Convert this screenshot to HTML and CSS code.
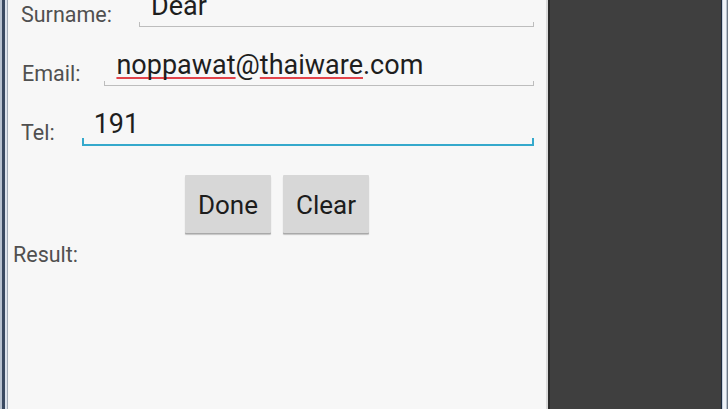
FILE: index.html
```html
<!DOCTYPE html>
<html>
<head>
<meta charset="utf-8">
<link rel="stylesheet" href="styles.css">
</head>
<body>
<div class="device">
  <div class="frame-left"></div>
  <div class="screen">
    <div class="row row-first">
      <span class="label">Surname:</span>
      <div class="field"><span class="value">Dear</span></div>
    </div>
    <div class="row">
      <span class="label label-tight">Email:</span>
      <div class="field"><span class="value"><span class="spell">noppawat</span>@<span class="spell">thaiware</span>.com</span></div>
    </div>
    <div class="row">
      <span class="label">Tel:</span>
      <div class="field field-focus"><span class="value">191</span></div>
    </div>
    <div class="buttons">
      <button class="btn">Done</button>
      <button class="btn">Clear</button>
    </div>
    <div class="result">Result:</div>
  </div>
  <div class="divider"></div>
  <div class="dark"></div>
  <div class="frame-right"></div>
</div>
</body>
</html>
```
FILE: styles.css
```css
html, body {
  margin: 0;
  padding: 0;
  width: 728px;
  height: 409px;
  overflow: hidden;
  font-family: Roboto, "Liberation Sans", sans-serif;
}

.device {
  display: flex;
  width: 728px;
  height: 409px;
}

.frame-left {
  flex: 0 0 8px;
  background: linear-gradient(to right,
    #b9c3d1 0 2px,
    #3a4a62 2px 5px,
    #dde3ec 5px 7px,
    #a3acb8 7px 8px);
}

.screen {
  flex: 0 0 538px;
  box-sizing: border-box;
  padding: 0 12px 0 5px;
  background: #f7f7f7;
  overflow: hidden;
}

.row {
  display: flex;
  align-items: flex-start;
  padding-left: 8px;
  margin-top: 22px;
}

.row-first {
  margin-top: -10px;
}

.label {
  font-size: 21.5px;
  line-height: 25px;
  color: #505050;
  margin-top: 12px;
  margin-right: 27px;
  white-space: nowrap;
}

.label-tight {
  margin-left: 1px;
  margin-right: 24px;
}

.field {
  flex: 1;
  position: relative;
  padding: 0 0 4px 12px;
  border-bottom: 1px solid #bdbdbd;
  font-size: 27px;
  line-height: 32px;
  color: #1e1e1e;
  white-space: nowrap;
}

.field::before,
.field::after {
  content: "";
  position: absolute;
  bottom: 0;
  width: 1px;
  height: 4px;
  background: #bdbdbd;
}

.field::before { left: 0; }
.field::after { right: 0; }

.field-focus {
  border-bottom: 2px solid #35a9cc;
}

.field-focus::before,
.field-focus::after {
  width: 2px;
  height: 6px;
  background: #35a9cc;
}

.spell {
  text-decoration-line: underline;
  text-decoration-color: #e2434a;
  text-decoration-thickness: 2px;
  text-underline-offset: 3px;
  text-decoration-skip-ink: none;
}

.buttons {
  display: flex;
  justify-content: center;
  gap: 12px;
  margin: 29px -12px 0 -5px;
}

.btn {
  height: 58px;
  box-sizing: border-box;
  padding: 3px 13px 0 13px;
  border: none;
  border-radius: 1px;
  background: #d7d7d7;
  box-shadow: 0 1px 0 #a9a9a9, 0 2px 1px #c4c4c4;
  font-family: Roboto, "Liberation Sans", sans-serif;
  font-size: 26px;
  line-height: 55px;
  color: #1c1c1c;
}

.result {
  font-size: 21.5px;
  line-height: 25px;
  color: #505050;
  margin-top: 9px;
}

.divider {
  flex: 0 0 4px;
  background: linear-gradient(to right,
    #dadada 0 2px,
    #2c2c2c 2px 4px);
}

.dark {
  flex: 1;
  background: #3f3f3f;
}

.frame-right {
  flex: 0 0 7px;
  background: linear-gradient(to right,
    #1d2b3f 0 1px,
    #c6d1de 1px 2px,
    #eef2f7 2px 5px,
    #b8c2ce 5px 6px,
    #6b7785 6px 7px);
}
```
